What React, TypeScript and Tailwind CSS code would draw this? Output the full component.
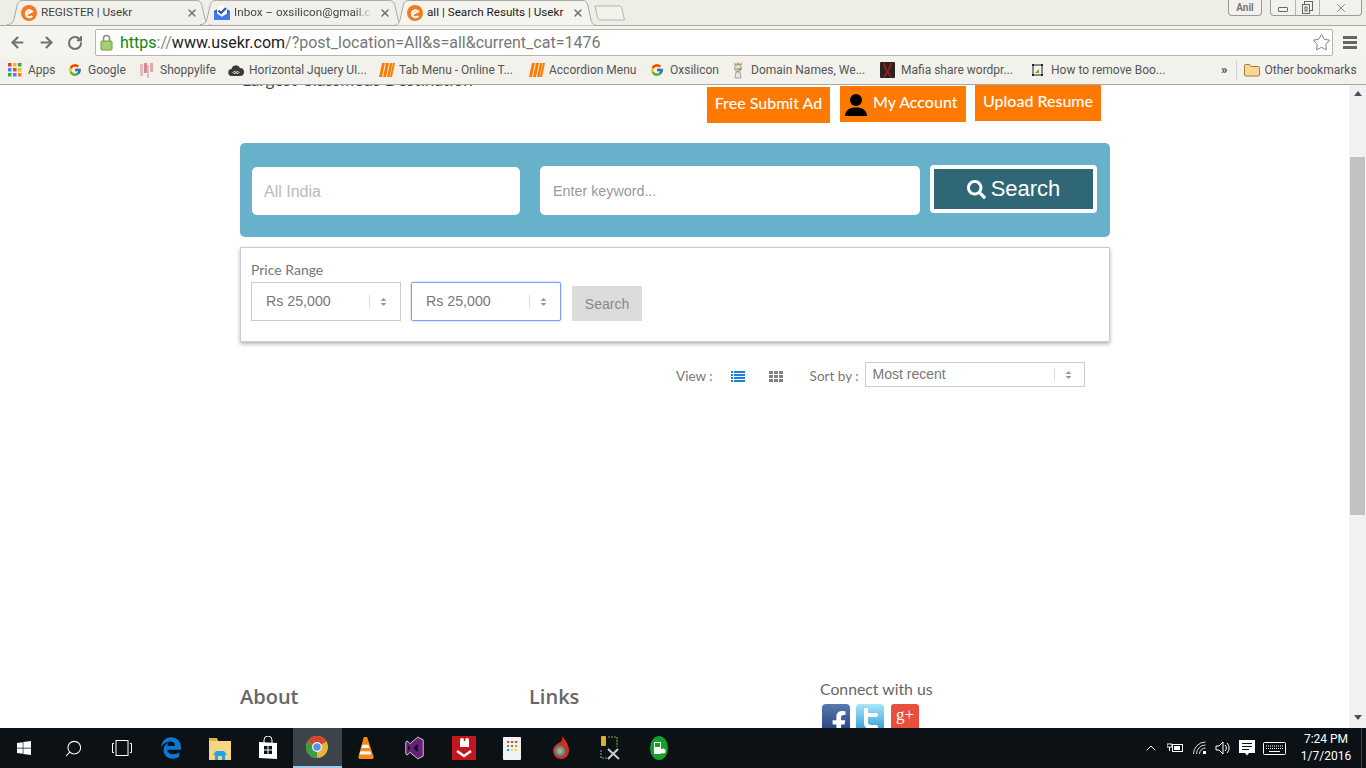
import React from "react";
import { FcGoogle } from "react-icons/fc";
import { FaWindows, FaEdgeLegacy, FaSearch, FaFacebookF } from "react-icons/fa";
import { ArrowLeft, ArrowRight, RotateCw, Star, Search, ChevronUp, X } from "lucide-react";

const UI = "font-['Roboto',sans-serif]";

function ELogo() {
  return (
    <svg width="16" height="16" viewBox="0 0 16 16" className="shrink-0">
      <circle cx="8" cy="8" r="8" fill="#f47a20" />
      <path d="M4.800 9.600 11 6.400A3.500 3.500 0 1 0 11.200 10.800" fill="none" stroke="#fff" strokeWidth="2.100" />
    </svg>
  );
}

function MailIcon() {
  return (
    <svg width="16" height="16" viewBox="0 0 16 16" className="shrink-0">
      <path d="M0 6 8 1l8 5v9H0z" fill="#2f5fc4" />
      <path d="M3 2.500 8 0l5 2.500V9l-5 3-5-3z" fill="#fff" />
      <path d="m4.500 5.500 2.500 2.500L12 3" fill="none" stroke="#2a56c6" strokeWidth="2.200" />
      <path d="M0 6.500 8 12l8-5.500V15H0z" fill="#3f7be6" />
    </svg>
  );
}

function TabShape({ active }: { active?: boolean }) {
  return (
    <svg className="absolute inset-0 h-full w-full" viewBox="0 0 200 26" preserveAspectRatio="none">
      <path
        d="M0 25.500C5 25.500 6 23 7 19L10 5C11 2 12 .5 16 .5H184C188 .5 189 2 190 5L193 19C194 23 195 25.500 200 25.500"
        fill={active ? "#f5f4ef" : "#f1f0ea"}
        stroke="#a9a9a4"
        strokeWidth="1"
        vectorEffect="non-scaling-stroke"
      />
    </svg>
  );
}

function Tab({ icon, title, active, w, fade }: { icon: React.ReactNode; title: string; active?: boolean; w: string; fade?: boolean }) {
  return (
    <div className={`relative shrink-0 ${w} ${active ? "z-10 h-[26px]" : "h-[25px]"}`}>
      <TabShape active={active} />
      <div className="absolute inset-x-0 top-0 flex h-[25px] items-center pl-[14px] pr-[14px] pt-[1px]">
        {icon}
        <span
          className={`ml-[4px] min-w-0 flex-1 overflow-hidden whitespace-nowrap text-[11.700px] ${active ? "text-[#222]" : "text-[#444]"} ${fade ? "[mask-image:linear-gradient(to_right,black_88%,transparent)]" : ""}`}
        >
          {title}
        </span>
        <X size={12} strokeWidth={3} className="ml-[7px] shrink-0 text-[#707070]" />
      </div>
    </div>
  );
}

function Stripes() {
  return (
    <svg width="16" height="14" viewBox="0 0 16 14" className="shrink-0">
      <path d="M3 0h3L3 14H0zM7 0h3L7 14H4zM11 0h2.500L10.500 14H8zM14 0h2l-3 14h-2z" fill="#ff7b00" />
    </svg>
  );
}

const bookmarks: { w: string; label: string; icon: React.ReactNode; gap: string }[] = [
  {
    w: "w-[60px]",
    label: "Apps",
    gap: "ml-[6px]",
    icon: (
      <svg width="14" height="14" viewBox="0 0 14 14" className="shrink-0">
        {[0, 5, 10].map((y, r) =>
          [0, 5, 10].map((x, c) => (
            <rect key={`${r}${c}`} x={x} y={y} width="3.500" height="3.500" fill={["#e53935", "#fbbc05", "#34a853", "#4285f4", "#ea4335", "#fbbc05", "#34a853", "#4285f4", "#f4811f"][r * 3 + c]} />
          ))
        )}
      </svg>
    ),
  },
  { w: "w-[71px]", label: "Google", gap: "ml-[6px]", icon: <FcGoogle size={14} className="shrink-0" /> },
  {
    w: "w-[89px]",
    label: "Shoppylife",
    gap: "ml-[5px]",
    icon: (
      <svg width="16" height="16" viewBox="0 0 16 16" className="shrink-0">
        <rect width="16" height="16" fill="#f2f0f0" />
        <rect x="1" y="2" width="3" height="12" fill="#e8b9bd" />
        <rect x="5" y="1" width="3" height="10" fill="#d9868e" />
        <rect x="8" y="3" width="2" height="13" fill="#c9c3c3" />
        <rect x="11" y="1" width="3" height="9" fill="#e7a6ac" />
      </svg>
    ),
  },
  {
    w: "w-[151px]",
    label: "Horizontal Jquery UI...",
    gap: "ml-[5px]",
    icon: (
      <svg width="16" height="14" viewBox="0 0 16 14" className="shrink-0">
        <path d="M4 13a3.500 3.500 0 0 1-.5-7A4.500 4.500 0 0 1 12 5a4 4 0 0 1 0 8z" fill="#3a3a3a" />
        <path d="M5 9.500c1-1.500 2-1 3 0s2 1.500 3 0c-1-1.500-2-1-3 0s-2 1.500-3 0z" fill="none" stroke="#fff" strokeWidth=".9" />
      </svg>
    ),
  },
  { w: "w-[150px]", label: "Tab Menu - Online T...", gap: "ml-[4px]", icon: <Stripes /> },
  { w: "w-[121px]", label: "Accordion Menu", gap: "ml-[4px]", icon: <Stripes /> },
  { w: "w-[81px]", label: "Oxsilicon", gap: "ml-[6px]", icon: <FcGoogle size={14} className="shrink-0" /> },
  {
    w: "w-[149px]",
    label: "Domain Names, We...",
    gap: "ml-[6px]",
    icon: (
      <svg width="14" height="18" viewBox="0 0 14 18" className="shrink-0">
        <path d="M3 1l2 2 2-2 2 2 2-2v3H3z" fill="#d9a35a" />
        <circle cx="7" cy="7" r="3.500" fill="#e3e3d5" stroke="#777" strokeWidth=".7" />
        <path d="M3 8l8-1-2 2z" fill="#6f9a22" />
        <path d="M5 11h4l1 6H4z" fill="#e8e8e0" stroke="#888" strokeWidth=".7" />
      </svg>
    ),
  },
  {
    w: "w-[151px]",
    label: "Mafia share wordpr...",
    gap: "ml-[6px]",
    icon: (
      <svg width="15" height="16" viewBox="0 0 15 16" className="shrink-0">
        <rect width="15" height="16" rx="1" fill="#2b2220" />
        <path d="M4 1c0 5 3 8 7 14M11 1C11 6 8 9 4 15" fill="none" stroke="#b81f1f" strokeWidth="1.300" />
      </svg>
    ),
  },
  {
    w: "w-[191px]",
    label: "How to remove Boo...",
    gap: "ml-[7px]",
    icon: (
      <svg width="13" height="14" viewBox="0 0 13 14" className="shrink-0">
        <rect x="2" y="2" width="9" height="10" fill="#f2f2ea" stroke="#222" />
        <path d="M1 1h2v2H1zM10 1h2v2h-2zM1 11h2v2H1zM10 11h2v2h-2z" fill="#222" />
        <path d="M4 10l4-4v4z" fill="#7ca32b" />
      </svg>
    ),
  },
];

function TabStrip() {
  return (
    <div className="relative flex h-[25px] shrink-0 items-start bg-[#eeede6] pl-[7px]">
      <Tab w="w-[205px]" icon={<ELogo />} title="REGISTER | Usekr" />
      <Tab w="w-[205px] -ml-[12px]" fade icon={<MailIcon />} title="Inbox – oxsilicon@gmail.com" />
      <Tab w="w-[205px] -ml-[12px]" active icon={<ELogo />} title="all | Search Results | Usekr" />
      <svg width="32" height="16" viewBox="0 0 32 16" className="-ml-[4px] mt-[5px] shrink-0">
        <path d="M1 1H25C27 1 27.500 2 28 4L30.500 15H6C4.500 15 4 14 3.500 12z" fill="#f3f2ed" stroke="#b4b4af" />
      </svg>
      <div className="ml-auto mr-[4px] flex items-start gap-[8px]">
        <div className="flex h-[16px] w-[34px] items-center justify-center rounded-b-[4px] border border-t-0 border-[#9a9a96] bg-[#f2f1ec] text-[10px] font-bold text-[#777]">Anil</div>
        <div className="flex h-[16px] w-[92px] rounded-b-[4px] border border-t-0 border-[#9a9a96] bg-[#f2f1ec]">
          <div className="flex w-[24px] items-center justify-center"><div className="mt-[3px] h-[5px] w-[10px] rounded-[1px] border border-[#666]" /></div>
          <div className="flex w-[25px] items-center justify-center border-x border-[#b5b5b0]">
            <svg width="11" height="13" viewBox="0 0 11 13"><rect x="2.500" y=".5" width="8" height="9" fill="none" stroke="#666" /><rect x=".5" y="3.500" width="7" height="9" fill="#f2f1ec" stroke="#666" /><rect x="3" y="6" width="2" height="4" fill="none" stroke="#666" /></svg>
          </div>
          <div className="flex flex-1 items-center justify-center"><X size={14} strokeWidth={1.500} className="text-[#777]" /></div>
        </div>
      </div>
    </div>
  );
}

function Toolbar() {
  return (
    <div className="h-[32px] shrink-0 border-t border-[#a9a9a4] bg-[#f5f4ef] pt-[3px]">
      <div className="flex h-[27px] items-center pl-[9px]">
        <ArrowLeft size={17} strokeWidth={3} className="text-[#707070]" />
        <ArrowRight size={17} strokeWidth={3} className="ml-[12px] text-[#707070]" />
        <RotateCw size={16} strokeWidth={3} className="ml-[12px] text-[#707070]" />
        <div className={`ml-[12px] flex h-[27px] w-[1238px] items-center rounded-[2px] border border-[#b4b4b0] bg-white pl-[4px] text-[16px] ${UI}`}>
          <svg width="13" height="17" viewBox="0 0 13 17" className="shrink-0">
            <path d="M3.500 7V4.500a3 3 0 0 1 6 0V7" fill="none" stroke="#8a8a7a" strokeWidth="1.500" />
            <rect x="1" y="7" width="11" height="9" rx="1" fill="#a3d16f" stroke="#6c9c3a" />
          </svg>
          <span className="ml-[7px] whitespace-nowrap">
            <span className="text-[#0a8a0a]">https</span>
            <span className="text-[#888]">://</span>
            <span className="text-[#222]">www.usekr.com</span>
            <span className="text-[#777]">/?post_location=All&amp;s=all&amp;current_cat=1476</span>
          </span>
          <Star size={19} strokeWidth={1.200} className="ml-auto mr-[1px] text-[#777]" />
        </div>
        <div className="ml-[10px] flex w-[14px] flex-col gap-[2px]">
          <div className="h-[3px] bg-[#666]" />
          <div className="h-[3px] bg-[#666]" />
          <div className="h-[3px] bg-[#666]" />
        </div>
      </div>
    </div>
  );
}

function BookmarksBar() {
  return (
    <div className={`flex h-[28px] shrink-0 items-center border-b border-[#a8a8a5] bg-[#f2f1ec] pb-[2px] pl-[8px] text-[12px] text-[#555] ${UI}`}>
      {bookmarks.map((b) => (
        <div key={b.label} className={`flex items-center whitespace-nowrap ${b.w}`}>
          {b.icon}
          <span className={b.gap}>{b.label}</span>
        </div>
      ))}
      <span className="-ml-[1px] text-[13px] font-bold text-[#444]">»</span>
      <div className="ml-[8px] h-[20px] w-px bg-[#d2d2ce]" />
      <svg width="16" height="14" viewBox="0 0 16 14" className="ml-[7px] shrink-0">
        <path d="M.5 2.500a1 1 0 0 1 1-1h4l1.500 2h7.500a1 1 0 0 1 1 1V12a1 1 0 0 1-1 1h-13a1 1 0 0 1-1-1z" fill="#f5d79a" stroke="#a87b35" />
      </svg>
      <span className="ml-[5px] whitespace-nowrap">Other bookmarks</span>
    </div>
  );
}

function Updown() {
  return (
    <svg width="7" height="10" viewBox="0 0 7 10" className="shrink-0">
      <path d="M3.500 1 6.500 4H.5zM3.500 9 .5 6h6z" fill="#999" />
    </svg>
  );
}

function RangeSelect({ focus, ml }: { focus?: boolean; ml?: string }) {
  return (
    <div className={`flex h-[39px] w-[150px] items-center pl-[14px] pr-[13px] font-['Liberation_Sans',sans-serif] text-[14.200px] text-[#777] ${focus ? "rounded-[2px] border border-[#7fa5ee] shadow-[0_0_2px_#7fa5ee]" : "border border-[#ccc]"} ${ml ?? ""}`}>
      <span className="flex-1">Rs 25,000</span>
      <span className="mr-[10px] h-[13px] w-px bg-[#ddd]" />
      <Updown />
    </div>
  );
}

function Page() {
  return (
    <div className="flex min-w-0 flex-1 justify-start overflow-hidden bg-white">
      <div className="ml-[240px] flex w-[870px] flex-col font-['Lato',sans-serif]">
        <div className="flex h-[58px] items-start">
          <div className="-mt-[15px] ml-[2px] whitespace-nowrap text-[17.200px] leading-[20px] text-[#444]">Largest Classifieds Destination</div>
          <div className="ml-auto mr-[9px] flex items-start text-[16px] font-medium text-white">
            <div className="mt-[2px] flex h-[36px] w-[123px] items-center justify-center bg-[#ff7900] pb-[4px]">Free Submit Ad</div>
            <div className="ml-[10px] mt-[1px] flex h-[36px] w-[126px] items-center bg-[#ff7900] pl-[5px]">
              <svg width="22" height="22" viewBox="0 0 22 22" className="mt-[1px] shrink-0">
                <circle cx="11" cy="6" r="6" fill="#000" />
                <path d="M0 22C0 16 5 13.500 11 13.500S22 16 22 22z" fill="#000" />
              </svg>
              <span className="ml-[6px] pb-[5px]">My Account</span>
            </div>
            <div className="ml-[9px] flex h-[36px] w-[126px] items-center justify-center bg-[#ff7900] pb-[4px]">Upload Resume</div>
          </div>
        </div>

        <div className="flex h-[94px] rounded-[5px] bg-[#67b2ca] pl-[12px] font-['Liberation_Sans',sans-serif]">
          <div className="mt-[24px] flex h-[48px] w-[268px] items-center rounded-[5px] bg-white pl-[12px] pt-[1px] text-[16px] text-[#bbb]">All India</div>
          <div className="ml-[20px] mt-[23px] flex h-[49px] w-[380px] items-center rounded-[5px] bg-white pl-[13px] pt-[2px] text-[14.300px] text-[#999]">Enter keyword...</div>
          <div className="ml-[10px] mt-[22px] flex h-[48px] w-[167px] items-center justify-center gap-[5px] rounded-[4px] border-[4px] border-white bg-[#306777] pb-[2px] text-[22px] text-white">
            <FaSearch size={19} className="mt-[2px]" />
            <span>Search</span>
          </div>
        </div>

        <div className="mt-[10px] h-[95px] border border-[#ccc] pl-[10px] shadow-[0_2px_4px_rgba(0,0,0,0.3)]">
          <div className="mt-[14px] text-[14px] leading-[16px] text-[#777]">Price Range</div>
          <div className="mt-[4px] flex items-end">
            <RangeSelect />
            <RangeSelect focus ml="ml-[10px]" />
            <div className="ml-[11px] flex h-[35px] w-[70px] items-center justify-center bg-[#dcdcdc] pt-[1px] font-['Liberation_Sans',sans-serif] text-[14px] text-[#888]">Search</div>
          </div>
        </div>

        <div className="ml-[436px] mt-[20px] flex h-[25px] items-center text-[13.500px] text-[#777]">
          <span className="mt-[4px] whitespace-nowrap">View :</span>
          <svg width="14" height="11" viewBox="0 0 14 11" className="ml-[18px] mt-[3px] shrink-0">
            <path d="M0 0h2v2H0zM3 0h11v2H3zM0 3h2v2H0zM3 3h11v2H3zM0 6h2v2H0zM3 6h11v2H3zM0 9h2v2H0zM3 9h11v2H3z" fill="#1a7fd6" />
          </svg>
          <svg width="14" height="11" viewBox="0 0 14 11" className="ml-[24px] mt-[3px] shrink-0">
            <path d="M0 0h4v3H0zM5 0h4v3H5zM10 0h4v3h-4zM0 4h4v3H0zM5 4h4v3H5zM10 4h4v3h-4zM0 8h4v3H0zM5 8h4v3H5zM10 8h4v3h-4z" fill="#808080" />
          </svg>
          <span className="ml-[27px] mt-[4px] whitespace-nowrap">Sort by :</span>
          <div className="ml-[6px] flex h-[25px] w-[220px] shrink-0 items-center border border-[#ccc] pl-[7px] pr-[12px] font-['Liberation_Sans',sans-serif] text-[14px]">
            <span className="-mt-[1px] flex-1">Most recent</span>
            <span className="mr-[10px] h-[13px] w-px bg-[#ddd]" />
            <Updown />
          </div>
        </div>

        <div className="mt-[292px] flex text-[#666]">
          <div className="mt-[6px] w-[289px] font-['Open_Sans',sans-serif] text-[20px] font-semibold leading-[24px]">About</div>
          <div className="mt-[6px] w-[291px] font-['Open_Sans',sans-serif] text-[20px] font-semibold leading-[24px]">Links</div>
          <div>
            <div className="text-[15.800px] leading-[20px]">Connect with us</div>
            <div className="ml-[2px] mt-[5px] flex h-[24px] items-start overflow-hidden">
              <div className="flex h-[28px] w-[28px] items-end justify-center overflow-hidden rounded-[4px] bg-gradient-to-b from-[#5a78b0] to-[#27437f] pl-[6px] text-white"><FaFacebookF size={24} className="-mb-[3px]" /></div>
              <div className="ml-[6px] flex h-[28px] w-[28px] items-center justify-center rounded-[4px] bg-gradient-to-b from-[#a6e6f8] to-[#1f9bd2]">
                <svg width="18" height="24" viewBox="0 0 18 24" className="-mb-[2px]">
                  <path d="M3 1h4v5h8a2 2 0 0 1 0 4H7v5c0 2 1 3 3 3h5a2 2 0 0 1 0 4H9c-4 0-6-3-6-6z" fill="#fff" />
                </svg>
              </div>
              <div className="ml-[7px] flex h-[28px] w-[28px] items-start justify-center rounded-[3px] bg-[#e7503c] pt-[1px] font-['Liberation_Serif',serif] text-[17px] leading-[20px] text-white">g+</div>
            </div>
          </div>
        </div>
      </div>
    </div>
  );
}

function Scrollbar() {
  return (
    <div className="flex h-full w-[17px] shrink-0 flex-col items-center bg-[#f1f1f1]">
      <div className="mt-[6px] h-0 w-0 border-x-[4px] border-b-[5px] border-x-transparent border-b-[#505050]" />
      <div className="mt-[61px] h-[358px] w-[15px] bg-[#c1c1c1]" />
      <div className="mt-[200px] h-0 w-0 border-x-[4px] border-t-[5px] border-x-transparent border-t-[#505050]" />
    </div>
  );
}

function Slot({ children, active }: { children: React.ReactNode; active?: boolean }) {
  return (
    <div className={`flex h-[40px] w-[48.800px] shrink-0 items-center justify-center ${active ? "border-b-2 border-[#9ccbf0] bg-[#3d4449]" : ""}`}>
      {children}
    </div>
  );
}

function Taskbar() {
  return (
    <div className="flex h-[40px] shrink-0 items-center bg-[#0b1115] text-white">
      <Slot><FaWindows size={16} /></Slot>
      <Slot><Search size={19} strokeWidth={1.300} className="-scale-x-100" /></Slot>
      <Slot>
        <svg width="20" height="16" viewBox="0 0 20 16"><rect x="4" y=".5" width="12" height="15" fill="none" stroke="#fff" /><path d="M2 3.500H.5v9H2M18 3.500h1.500v9H18" fill="none" stroke="#fff" /></svg>
      </Slot>
      <Slot><FaEdgeLegacy size={22} className="text-[#0b78d7]" /></Slot>
      <Slot>
        <svg width="22" height="23" viewBox="0 0 22 23"><path d="M0 1h8l1 3h13v19H0z" fill="#f6d683" /><path d="M0 1h8v3H0z" fill="#e3b33f" /><path d="M7 14h8l3 4h-2v5H6v-5H4z" fill="#22a4ea" /><rect x="9" y="19" width="4" height="4" fill="#f6d683" /></svg>
      </Slot>
      <Slot>
        <svg width="20" height="24" viewBox="0 0 20 24"><path d="M6 7V4a4 4 0 0 1 8 0v3" fill="none" stroke="#fff" /><path d="M1 6l18 1v16L1 22z" fill="#fff" /><path d="M6 10h3.500v3.500H6zM10.500 10H14v3.500h-3.500zM6 14.500h3.500V18H6zM10.500 14.500H14V18h-3.500z" fill="#111" /></svg>
      </Slot>
      <Slot active>
        <svg width="22" height="22" viewBox="0 0 18 18">
          <circle cx="9" cy="9" r="9" fill="#e3b73c" />
          <path d="M9 9 1.200 4.500A9 9 0 0 1 16.800 4.500z" fill="#d5442f" />
          <path d="M9 9 1.200 4.500A9 9 0 0 0 9 18z" fill="#3f9a45" />
          <circle cx="9" cy="9" r="4" fill="#fff" />
          <circle cx="9" cy="9" r="3.100" fill="#5b8fe6" />
        </svg>
      </Slot>
      <Slot>
        <svg width="20" height="24" viewBox="0 0 16 22"><path d="M6 1h3l6 18a2 2 0 0 1-1 2H2a2 2 0 0 1-1-2z" fill="#f58a12" /><path d="M4.800 8h5.400l1 3H3.800zM3 14h9l1 3H2z" fill="#f5f5f5" /></svg>
      </Slot>
      <Slot>
        <svg width="23" height="24" viewBox="0 0 18 22"><path d="M12 1l5 2.500v15L12 21 5 15l-3 2.500L1 16V6l1-1.500L5 7z" fill="#68217a" stroke="#ddd" strokeWidth=".8" /><path d="M12 7v8l-4-4z" fill="#0b1115" /><path d="M3 8.500v5l2-2.500z" fill="#0b1115" /></svg>
      </Slot>
      <Slot>
        <svg width="24" height="24" viewBox="0 0 24 24"><rect width="24" height="24" rx="1" fill="#c4161c" /><rect x="8" y="5" width="9" height="6" fill="#fff" /><circle cx="10" cy="4" r="2" fill="#fff" /><circle cx="15" cy="4" r="2" fill="#fff" /><path d="M5 15l7 5 7-5" fill="none" stroke="#fff" strokeWidth="2.500" /></svg>
      </Slot>
      <Slot>
        <svg width="22" height="23" viewBox="0 0 18 23">
          <rect width="18" height="23" rx="1" fill="#f1f1f1" />
          <path d="M4 4h2v2H4zM8 4h2v2H8zM12 4h2v2h-2z" fill="#e53935" />
          <path d="M4 8h2v2H4zM8 8h2v2H8z" fill="#43a047" /><path d="M12 8h2v2h-2z" fill="#fb8c00" />
          <path d="M4 12h2v2H4z" fill="#1e88e5" /><path d="M8 12h2v2H8zM12 12h2v2h-2z" fill="#fdd835" />
        </svg>
      </Slot>
      <Slot>
        <svg width="20" height="24" viewBox="0 0 16 24"><path d="M9 0c4 5 7 9 7 15a8 8 0 0 1-16 0C0 11 3 8 6 7c2-1 4-3 3-7z" fill="#d1311c" /><circle cx="7" cy="15" r="5" fill="#3a9ec2" /><circle cx="7" cy="15" r="2.500" fill="#e0a33a" /></svg>
      </Slot>
      <Slot>
        <svg width="24" height="24" viewBox="0 0 20 24"><rect x="1" y="0" width="5" height="10" rx="1" fill="#d9b13c" /><path d="M8 1h9v10M1 14v8h8" fill="none" stroke="#6fa14a" strokeWidth="1.200" strokeDasharray="2 1" /><path d="M8 13l11 10M18 13 8 23" stroke="#ccc" strokeWidth="2" /></svg>
      </Slot>
      <Slot>
        <svg width="24" height="24" viewBox="0 0 18 24"><ellipse cx="9" cy="12" rx="9" ry="12" fill="#14a02c" /><rect x="4" y="6" width="7" height="12" fill="#fff" /><rect x="5" y="7" width="5" height="4" fill="#14a02c" /><circle cx="13" cy="15" r="2.500" fill="#fff" /></svg>
      </Slot>
      <div className={`ml-auto flex h-full items-center ${UI}`}>
        <ChevronUp size={16} strokeWidth={1.500} />
        <svg width="16" height="12" viewBox="0 0 16 12" className="ml-[8px]"><rect x="5.500" y="2.500" width="10" height="7" fill="none" stroke="#fff" /><rect x="7" y="4" width="6" height="4" fill="#fff" /><path d="M0 2h5v3H0zM2.500 5v4" stroke="#fff" /></svg>
        <svg width="14" height="14" viewBox="0 0 14 14" className="ml-[10px]"><path d="M.5 13A12 12 0 0 1 12.500 1M3.500 13a9 9 0 0 1 9-9M6.500 13a6 6 0 0 1 6-6" fill="none" stroke="#ddd" /><rect x="10" y="10" width="3" height="3" fill="#fff" /></svg>
        <svg width="15" height="14" viewBox="0 0 15 14" className="ml-[8px]"><path d="M1 5h3l4-4v12L4 9H1zM10 4a4 4 0 0 1 0 6M12 2a7 7 0 0 1 0 10" fill="none" stroke="#fff" /></svg>
        <svg width="16" height="16" viewBox="0 0 16 16" className="ml-[9px]"><path d="M0 0h16v13H10l-2 2.500L6 13H0z" fill="#fff" /><path d="M3 3.500h10M3 6.500h10M3 9.500h7" stroke="#111" /></svg>
        <svg width="23" height="13" viewBox="0 0 23 13" className="ml-[8px]"><rect x=".5" y=".5" width="22" height="12" rx="1" fill="none" stroke="#fff" /><path d="M3 4h17M3 6.500h17" stroke="#fff" strokeDasharray="1 1" /><path d="M6 9.500h11" stroke="#fff" /></svg>
        <div className="w-[75px] pl-[5px] text-center text-[12px] leading-[17px] text-white">
          <div>7:24 PM</div>
          <div>1/7/2016</div>
        </div>
        <div className="mr-[4px] h-full w-px bg-[#444]" />
      </div>
    </div>
  );
}

export default function App() {
  return (
    <div className={`flex h-[768px] w-[1366px] flex-col overflow-hidden ${UI}`}>
      <TabStrip />
      <Toolbar />
      <BookmarksBar />
      <div className="flex h-[643px] shrink-0">
        <Page />
        <Scrollbar />
      </div>
      <Taskbar />
    </div>
  );
}
